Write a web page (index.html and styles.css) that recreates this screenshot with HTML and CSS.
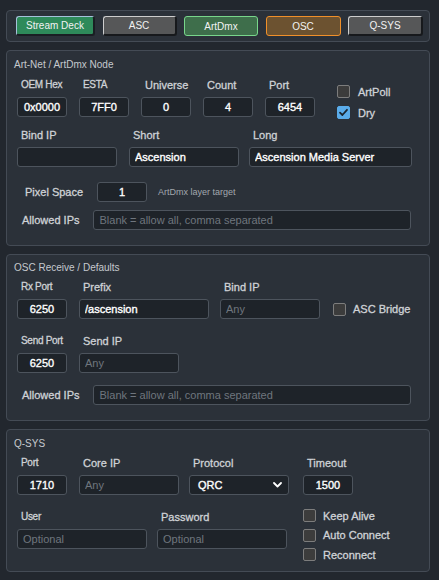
FILE: index.html
```html
<!DOCTYPE html>
<html>
<head>
<meta charset="utf-8">
<link rel="stylesheet" href="styles.css">
</head>
<body>
<div class="page">
  <div class="panel tabs">
    <div class="tab tab-sd w79">Stream Deck</div>
    <div class="tab tab-grey w74">ASC</div>
    <div class="tab tab-art w74">ArtDmx</div>
    <div class="tab tab-osc w75">OSC</div>
    <div class="tab tab-grey w75">Q-SYS</div>
  </div>

  <section class="panel artnet">
    <div class="title">Art-Net / ArtDmx Node</div>
    <div class="row an-r1">
      <div class="field"><label class="lbl sm">OEM Hex</label><input class="inp num bold w50" value="0x0000"></div>
      <div class="field m12"><label class="lbl sm">ESTA</label><input class="inp num bold w50" value="7FF0"></div>
      <div class="field m12"><label class="lbl">Universe</label><input class="inp num bold w50" value="0"></div>
      <div class="field m12"><label class="lbl">Count</label><input class="inp num bold w50" value="4"></div>
      <div class="field m12"><label class="lbl">Port</label><input class="inp num bold w50" value="6454"></div>
      <div class="checks an-checks">
        <div class="check"><span class="cb"></span><span class="cl">ArtPoll</span></div>
        <div class="check"><span class="cb on"><svg width="11" height="11" viewBox="0 0 11 11"><path d="M2 5.6 L4.4 8 L9 2.8" fill="none" stroke="#1b2631" stroke-width="1.8" stroke-linecap="round" stroke-linejoin="round"/></svg></span><span class="cl">Dry</span></div>
      </div>
    </div>
    <div class="row an-r2">
      <div class="field"><label class="lbl">Bind IP</label><input class="inp w100" value=""></div>
      <div class="field m12"><label class="lbl">Short</label><input class="inp bold w110" value="Ascension"></div>
      <div class="field m10"><label class="lbl">Long</label><input class="inp bold w163" value="Ascension Media Server"></div>
    </div>
    <div class="row inline an-r3">
      <span class="ilbl px-lbl">Pixel Space</span>
      <input class="inp num bold w50" value="1">
      <span class="hint">ArtDmx layer target</span>
    </div>
    <div class="row inline an-r4">
      <span class="ilbl ip-lbl">Allowed IPs</span>
      <input class="inp w320" placeholder="Blank = allow all, comma separated">
    </div>
  </section>

  <section class="panel osc">
    <div class="title">OSC Receive / Defaults</div>
    <div class="row osc-r1">
      <div class="field"><label class="lbl sm">Rx Port</label><input class="inp num bold w50" value="6250"></div>
      <div class="field m12"><label class="lbl">Prefix</label><input class="inp bold w130" value="/ascension"></div>
      <div class="field m11"><label class="lbl">Bind IP</label><input class="inp w100" placeholder="Any"></div>
      <div class="check osc-check"><span class="cb"></span><span class="cl">ASC Bridge</span></div>
    </div>
    <div class="row osc-r2">
      <div class="field"><label class="lbl sm">Send Port</label><input class="inp num bold w50" value="6250"></div>
      <div class="field m12"><label class="lbl">Send IP</label><input class="inp w100" placeholder="Any"></div>
    </div>
    <div class="row inline osc-r3">
      <span class="ilbl ip-lbl">Allowed IPs</span>
      <input class="inp w320" placeholder="Blank = allow all, comma separated">
    </div>
  </section>

  <section class="panel qsys">
    <div class="title">Q-SYS</div>
    <div class="row q-r1">
      <div class="field"><label class="lbl sm">Port</label><input class="inp num bold w50" value="1710"></div>
      <div class="field m12"><label class="lbl">Core IP</label><input class="inp w100" placeholder="Any"></div>
      <div class="field m10"><label class="lbl">Protocol</label>
        <div class="select w100"><span>QRC</span><svg width="9" height="6" viewBox="0 0 9 6"><path d="M1 1 L4.5 4.5 L8 1" fill="none" stroke="#ffffff" stroke-width="1.8" stroke-linecap="round" stroke-linejoin="round"/></svg></div>
      </div>
      <div class="field m14"><label class="lbl">Timeout</label><input class="inp num bold w50" value="1500"></div>
    </div>
    <div class="row q-r2">
      <div class="field"><label class="lbl sm">User</label><input class="inp w130" placeholder="Optional"></div>
      <div class="field m10"><label class="lbl">Password</label><input class="inp w130" placeholder="Optional"></div>
      <div class="checks q-checks">
        <div class="check"><span class="cb"></span><span class="cl">Keep Alive</span></div>
        <div class="check"><span class="cb"></span><span class="cl">Auto Connect</span></div>
        <div class="check"><span class="cb"></span><span class="cl">Reconnect</span></div>
      </div>
    </div>
  </section>
</div>
</body>
</html>
```

FILE: styles.css
```css
html, body {
  margin: 0;
  background: #22272e;
  font-family: "Liberation Sans", Arial, sans-serif;
}

.page {
  padding: 10px 0 0 6px;
  width: 424px;
}

.panel {
  box-sizing: border-box;
  background: #2b3139;
  border: 1px solid #444b55;
  border-radius: 4px;
  margin-bottom: 8px;
}

/* tabs */
.tabs {
  display: flex;
  gap: 7.5px;
  padding: 5px 6px 5px 9px;
}

.tab {
  box-sizing: border-box;
  height: 20px;
  border-radius: 3px;
  font-size: 10px;
  color: #f2f2f2;
  display: flex;
  align-items: center;
  justify-content: center;
}

.w79 { width: 79px; }
.w74 { width: 74px; }
.w75 { width: 75px; }

.tab-grey {
  background: #565758;
  border-style: solid;
  border-width: 1px 2px 2px 1px;
  border-color: #cdcdcd #17191c #17191c #cdcdcd;
}

.tab-sd {
  background: #2e8a5a;
  border-style: solid;
  border-width: 1px 2px 2px 1px;
  border-color: #a5c2da #1a1e23 #1a1e23 #a5c2da;
}

.tab-art {
  background: #3e6e4b;
  border: 1px solid #78d68b;
}

.tab-osc {
  background: #6c5230;
  border: 1px solid #f0902a;
}

/* sections */
.title {
  font-size: 10px;
  line-height: 12px;
  color: #c5c9ce;
}

.artnet { padding: 8px 18px 15px 7px; }
.osc { padding: 7px 18px 15px 7px; }
.qsys { padding: 8px 18px 10px 7px; margin-bottom: 0; }

.row {
  display: flex;
  margin-left: 3px;
}

.inline { align-items: center; }

.field {
  display: flex;
  flex-direction: column;
  gap: 5px;
}

.m10 { margin-left: 10px; }
.m11 { margin-left: 11px; }
.m12 { margin-left: 12px; }
.m14 { margin-left: 14px; }

.lbl {
  font-size: 11px;
  line-height: 13px;
  color: #cfd2d6;
  padding-left: 4px;
  white-space: nowrap;
  -webkit-text-stroke: 0.3px #cfd2d6;
}

.lbl.sm {
  font-size: 10px;
  letter-spacing: -0.3px;
  line-height: 12px;
  margin-bottom: 1px;
}

.ilbl {
  font-size: 11px;
  line-height: 13px;
  color: #cfd2d6;
  white-space: nowrap;
  -webkit-text-stroke: 0.3px #cfd2d6;
}

.px-lbl { margin-left: 8px; margin-right: 14px; }
.ip-lbl { margin-left: 5px; margin-right: 14px; }

.hint {
  font-size: 9px;
  color: #a2a8ae;
  margin-left: 11px;
}

.inp {
  box-sizing: border-box;
  height: 20px;
  margin: 0;
  padding: 0 5px;
  background: #1e2329;
  border: 1px solid #4d545d;
  border-radius: 3px;
  color: #ffffff;
  font-family: "Liberation Sans", Arial, sans-serif;
  font-size: 11px;
  outline: none;
}

.inp.bold { -webkit-text-stroke: 0.35px #ffffff; }
.inp.num { text-align: center; }

.inp::placeholder { color: #6f767e; }

.w50 { width: 50px; }
.w100 { width: 100px; }
.w110 { width: 110px; }
.w130 { width: 130px; }
.w163 { width: 163px; }
.w320 { width: 320px; }

.select {
  box-sizing: border-box;
  height: 20px;
  background: #1e2329;
  border: 1px solid #4d545d;
  border-radius: 3px;
  display: flex;
  align-items: center;
  justify-content: space-between;
  padding: 0 6px 0 8px;
  color: #ffffff;
  font-size: 11px;
  -webkit-text-stroke: 0.35px #ffffff;
}

.select svg { display: block; }

/* checkboxes */
.checks {
  display: flex;
  flex-direction: column;
}

.check {
  display: flex;
  align-items: center;
  height: 13px;
}

.cb {
  box-sizing: border-box;
  width: 13px;
  height: 13px;
  border: 1px solid #7d7d7d;
  background: #3c3c3c;
  border-radius: 2px;
  display: flex;
  align-items: center;
  justify-content: center;
  flex: none;
}

.cb.on {
  background: #5aacea;
  border-color: #5aacea;
}

.cb svg { display: block; }

.cl {
  margin-left: 8px;
  font-size: 11px;
  color: #d0d3d7;
  white-space: nowrap;
  -webkit-text-stroke: 0.3px #d0d3d7;
}

/* row spacing */
.an-r1 { margin-top: 8px; }
.an-checks { margin-left: 22px; margin-top: 6px; margin-bottom: -2px; gap: 8px; }
.an-r2 { margin-top: 12px; }
.an-r3 { margin-top: 15px; }
.an-r4 { margin-top: 8px; }

.osc-r1 { margin-top: 7px; }
.osc-check { align-self: flex-end; height: 20px; margin-left: 13px; }
.osc-check .cl { margin-left: 7px; }
.osc-r2 { margin-top: 16px; }
.osc-r3 { margin-top: 12px; }

.q-r1 { margin-top: 7px; }
.q-r2 { margin-top: 16px; }
.q-checks { margin-left: 16px; margin-top: -2px; gap: 6.5px; }
.q-checks .cl { margin-left: 7px; }
```
